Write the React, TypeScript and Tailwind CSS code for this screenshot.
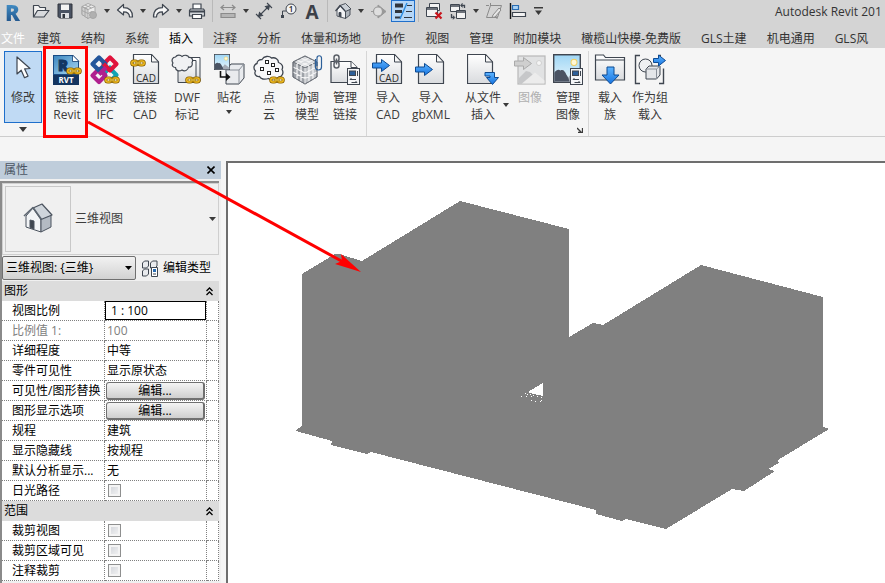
import React from "react";

const ink = "#3f4650";

const Gradients = () => (
  <svg className="absolute size-0" aria-hidden="true">
    <defs>
      <linearGradient id="paper" x1="0" y1="0" x2="0" y2="1">
        <stop offset="0" stopColor="#ffffff" />
        <stop offset="1" stopColor="#d9dbde" />
      </linearGradient>
      <linearGradient id="blue" x1="0" y1="0" x2="0" y2="1">
        <stop offset="0" stopColor="#5db4ff" />
        <stop offset="1" stopColor="#1673e0" />
      </linearGradient>
      <linearGradient id="sky" x1="0" y1="0" x2="0" y2="1">
        <stop offset="0" stopColor="#9fd6f5" />
        <stop offset="1" stopColor="#e8f6fc" />
      </linearGradient>
      <linearGradient id="rvt" x1="0" y1="0" x2="1" y2="1">
        <stop offset="0" stopColor="#3f88c0" />
        <stop offset="1" stopColor="#a6d6f2" />
      </linearGradient>
      <linearGradient id="logo" x1="0" y1="0" x2="0" y2="1">
        <stop offset="0" stopColor="#4b9bd2" />
        <stop offset="1" stopColor="#1d4f86" />
      </linearGradient>
    </defs>
  </svg>
);

/* ---------- shared icon parts ---------- */

const Chain = ({ x, y }) => (
  <g transform={`translate(${x} ${y})`} fill="none">
    <g stroke="#8a6100" strokeWidth="3.200">
      <rect x="1.800" y="2" width="5.400" height="4" rx="2" />
      <rect x="8.800" y="2" width="5.400" height="4" rx="2" />
    </g>
    <g stroke="#f2bd20" strokeWidth="1.500">
      <rect x="1.800" y="2" width="5.400" height="4" rx="2" />
      <rect x="8.800" y="2" width="5.400" height="4" rx="2" />
    </g>
    <g stroke="#fff0c0" strokeWidth="1">
      <path d="M3.500 4h2M10.500 4h2" />
    </g>
    <path d="M5.600 4h4.800" stroke="#8a6100" strokeWidth="2.600" />
    <path d="M5.600 4h4.800" stroke="#ffdc55" strokeWidth="1.200" />
  </g>
);

const Sheet = ({ x = 3 }) => (
  <g transform={`translate(${x} 0)`} stroke={ink} strokeLinejoin="round">
    <path d="M.5 .5h18l7 7.5v21.500h-25z" fill="url(#paper)" strokeWidth="1.200" />
    <path d="M18.500 .5v7.500h7z" fill="#f7f7f7" />
  </g>
);

const ArrowRight = ({ x, y, fill = "url(#blue)", stroke = "#0d4a92" }) => (
  <path
    transform={`translate(${x} ${y})`}
    d="M.5 4h9v-3.500l8 6-8 6v-3.500h-9z"
    fill={fill}
    stroke={stroke}
  />
);

const Landscape = ({ x, y, w, h }) => (
  <svg x={x} y={y} width={w} height={h} viewBox="0 0 28 28" preserveAspectRatio="none">
    <rect x=".7" y=".7" width="26.600" height="26.600" fill="url(#sky)" stroke={ink} strokeWidth="1.400" />
    <circle cx="21" cy="8" r="3" fill="#fff8d6" stroke="#f0cf60" />
    <path d="M12 26.600 19 18l8 6v2.600z" fill="#a3abb6" />
    <path d="M1.400 18c2-2.500 4-3.500 6-2 3-1.500 4.500 1 6 4 1.500 2 2.500 4 3 6.600H1.400z" fill="#4a5363" />
  </svg>
);

const Calc = ({ x, y }) => (
  <g transform={`translate(${x} ${y})`} stroke={ink}>
    <rect x=".5" y=".5" width="12" height="16" fill="#f4f5f7" />
    <rect x="2.500" y="3" width="6" height="4.500" fill="#2c5f99" />
    <path d="M10.500 3v5M3 11.500h6M4.500 10 3 11.500M4.500 14.500h5.500M8.500 13l1.500 1.500" fill="none" />
  </g>
);

/* ---------- ribbon icons, 32 x 32 ---------- */

const ribbonIcons = {
  cursor: (
    <path
      d="M10 3v17l4.200-3.800 3.300 7.500 3.500-1.600-3.300-7.200 5.300-.4z"
      fill="#fff"
      stroke={ink}
      strokeWidth="1.200"
      strokeLinejoin="round"
    />
  ),
  revit: (
    <>
      <path d="M2 1h20l6 6v24H2z" fill="#1a4c85" />
      <path d="M3 2h18.500l5.500 6v12H3z" fill="url(#rvt)" />
      <path d="M21.500 1v6.500H28z" fill="#fff" stroke="#143f72" strokeWidth=".8" />
      <text x="7" y="16.500" fontSize="15" fontWeight="800" fill="#123663" stroke="#123663" fontFamily="Open Sans, sans-serif">
        R
      </text>
      <rect x="2" y="21" width="26" height="10" fill="#143560" />
      <text x="15" y="29" textAnchor="middle" fontSize="8" fontWeight="700" fill="#fff" fontFamily="Open Sans, sans-serif">
        RVT
      </text>
      <Chain x={15} y={13} />
    </>
  ),
  ifc: (
    <>
      <g fill="none" strokeWidth="4.200" strokeLinejoin="round">
        <path d="m20.500 14 7 7-4 4" stroke="#12a3b4" />
        <path d="m14 20.500 7-7 3 3" stroke="#12a3b4" />
        <path d="M10 28 3.500 21.500 10 15l6.500 6.500z" stroke="#b0208e" />
        <path d="m10 15 6.500 6.500" stroke="#b0208e" />
        <path d="M21 3.500 27.500 10 21 16.500 14.500 10z" stroke="#e0143c" />
        <path d="M10 3.500 16.500 10 10 16.500 3.500 10z" stroke="#24569b" />
        <path d="m14.500 10 6.500 6.500" stroke="#e0143c" />
        <path d="m17 13.500-7 7" stroke="#b0208e" />
      </g>
      <Chain x={15} y={22} />
    </>
  ),
  linkCad: (
    <>
      <Sheet x={4} />
      <Chain x={1} y={5} />
      <text x="17" y="28" textAnchor="middle" fontSize="10" fill="#2b2b2b" fontFamily="Open Sans, sans-serif">
        CAD
      </text>
    </>
  ),
  dwf: (
    <>
      <path d="M12 3.500h17v24H12z" fill="url(#paper)" stroke={ink} />
      <path d="M7 6.500h18v22H7z" fill="url(#paper)" stroke={ink} />
      <path
        d="M4.500 3c1.500-2.500 5-2.500 6.500-.5 2.500-2 6-1.500 7 1 3-.5 4.500 2.500 3 5 1 3-1 5-3.500 4.500-.5 3.500-4 5-6.500 3-3 2-6.500.5-6.500-2.500C1.500 13.500.5 11 2 9 0 6.500 1.500 3 4.500 3z"
        fill="#f0f1f3"
        stroke={ink}
        strokeWidth="1.200"
      />
      <Chain x={14} y={22} />
    </>
  ),
  decal: (
    <>
      <path d="m13 16 5-6h13v14l-5 6H13z" fill="#e9ebee" stroke={ink} strokeLinejoin="round" />
      <path d="M13 16h13v14M26 16l5-6" fill="none" stroke="#8a9099" />
      <Landscape x={1} y={0} w={16} h={16} />
      <path d="M7.500 17v6h7" stroke="#111" strokeWidth="1.600" fill="none" />
      <path d="m13 19 4.500 4-4.500 4z" fill="#111" />
    </>
  ),
  cloud: (
    <>
      <path
        d="M9 5.500c2-3.500 7-4 9.500-1.500 4-1 7 1.500 7 4.500 3.500 1 5 4 3.500 7 2 3 .5 7-3 7.500-3 3.500-8 3.500-10.500 1.500-4 1.500-8 .5-9-2-4 .5-5.500-3-4-5.500C-.5 14 1.500 10 4 9.500 4 7.500 6 5.500 9 5.500z"
        fill="#f7f7f8"
        stroke={ink}
        strokeWidth="1.300"
      />
      <g fill="#fff" stroke="#222">
        <rect x="12.500" y="6.500" width="3" height="3" />
        <rect x="7.500" y="13.500" width="3" height="3" />
        <rect x="18.500" y="9.500" width="3" height="3" />
        <rect x="22.500" y="14.500" width="3" height="3" />
        <rect x="14.500" y="17.500" width="3" height="3" />
      </g>
      <Chain x={16} y={22} />
    </>
  ),
  coord: (
    <>
      <g stroke="#6c7178" strokeWidth=".9" strokeLinejoin="round">
        <path d="m14 2 12 6-12 6L2 8z" fill="#dadcdf" />
        <path d="m2 8 12 6v16L2 23z" fill="#9ea2a8" />
        <path d="m26 8-12 6v16l12-7z" fill="#bfc2c6" />
        <path d="m6 6 12 6M10 4l12 6M18 4 6 10M22 6l-12 6M2 13l12 6 12-6M2 18l12 6.500L26 18M6 10v15.500M10 12v15.800M18 12v15.800M22 10v15.500M14 14v16" fill="none" stroke="#f3f3f4" strokeWidth="1.300" />
        <path d="m14 2 12 6v15l-12 7-12-7V8z" fill="none" />
      </g>
      <path d="M24.500 5v8a3 3 0 0 0 6 0V4a2 2 0 0 0-4.500 0v8" fill="none" stroke="#2c5f99" strokeWidth="1.200" />
    </>
  ),
  manageLinks: (
    <>
      <path d="M2 7.500h20l6 6v15H2z" fill="url(#paper)" stroke={ink} strokeWidth="1.200" />
      <path d="M22 7.500v6h6" fill="#fff" stroke={ink} />
      <g fill="none" stroke="#5b6068" strokeWidth="1.500">
        <rect x="5" y="1" width="5" height="6.500" rx="2.500" />
        <rect x="5" y="7.500" width="5" height="6.500" rx="2.500" />
        <path d="M7.500 4.500v6" />
      </g>
      <Calc x={18} y={14} />
    </>
  ),
  importCad: (
    <>
      <Sheet x={4} />
      <ArrowRight x={0} y={5} />
      <text x="17" y="28" textAnchor="middle" fontSize="10" fill="#2b2b2b" fontFamily="Open Sans, sans-serif">
        CAD
      </text>
    </>
  ),
  importXml: (
    <>
      <Sheet x={3} />
      <ArrowRight x={0} y={9} />
    </>
  ),
  insertFile: (
    <>
      <Sheet x={0} />
      <path d="M18 18.500h9.500v5h4l-6 7-6-7h3.500v-1.500H18z" fill="url(#blue)" stroke="#0d4a92" />
    </>
  ),
  imageOff: (
    <>
      <rect x="4" y="2" width="27" height="28" fill="#e1e2e3" stroke="#b8b8b8" strokeWidth="1.200" />
      <circle cx="25" cy="9" r="2.500" fill="#f5f5f5" stroke="#d0d0d0" />
      <path d="m5 24 7-7 4 1 6 6 3 5.500H5z" fill="#c6c7c9" />
      <path d="m8 29.500 13-11 9.500 8v3z" fill="#ececec" />
      <ArrowRight x={0} y={3} fill="#cfcfcf" stroke="#aaaaaa" />
    </>
  ),
  manageImage: (
    <>
      <Landscape x={1} y={0} w={28} h={29} />
      <Calc x={18} y={14} />
    </>
  ),
  loadFamily: (
    <>
      <path d="M1.500 1h8l2 2.500h19V26h-29z" fill="url(#paper)" stroke={ink} strokeWidth="1.200" />
      <path d="M1.500 6h29" stroke={ink} />
      <path d="M13 13h7v8h5l-8.500 9L8 21h5z" fill="url(#blue)" stroke="#0d4a92" />
    </>
  ),
  loadGroup: (
    <>
      <path d="M6 1.500H1.500v28H6M25 29.500h4.500v-15M25 1.500h2" fill="none" stroke={ink} strokeWidth="1.400" />
      <circle cx="11.500" cy="11.500" r="6.500" fill="#eef0f2" stroke={ink} />
      <path d="m12 15 3-3h11v9l-3.500 4H12z" fill="#e4e6e9" stroke={ink} strokeLinejoin="round" />
      <path d="M12 15h10.500v10M22.500 15l3.500-3" fill="none" stroke="#8a9099" />
      <path d="M19.500 4.500h5v-3.500l7 5.500-7 5.500V8.500h-5z" fill="url(#blue)" stroke="#0d4a92" />
    </>
  ),
};

/* ---------- quick access icons, 18 x 18 ---------- */

const House = () => (
  <g stroke={ink} strokeWidth=".9" strokeLinejoin="round">
    <path d="m3 8 3.500-4 5 5v7.500L3 14z" fill="#f1f2f4" />
    <path d="m11.500 9 4.500-2v6l-4.500 3.500z" fill="#aeb4bb" />
    <path d="m6 3.500 5.500-2L17 7l-5.500 2.500z" fill="#cbd0d6" />
    <path d="m1.500 9 4.500-5.500 5.500 6" fill="none" strokeWidth="1.200" />
    <path d="M5 10.500h2V15l-2-1z" fill="#3f4650" />
  </g>
);

const quickIcons = {
  open: (
    <g stroke={ink} strokeWidth="1.200" strokeLinejoin="round">
      <path d="M1.500 15V3.500h5l1.500 2h5.500v3" fill="#f4f4f4" />
      <path d="m1.500 15 4-6.500H17L12 15z" fill="#d8dadd" />
    </g>
  ),
  save: (
    <>
      <path d="M2 2h14v14H3.500L2 14.500z" fill="#4a5363" stroke="#30353d" />
      <path d="M5 2.500h8V8H5z" fill="#f3f3f3" />
      <path d="M5 11h8v5H5z" fill="#dfe1e4" />
      <path d="M6.500 12h2.500v4H6.500z" fill="#30353d" />
    </>
  ),
  sync: (
    <g stroke="#a3a3a3" strokeWidth=".9" fill="#c9c9c9">
      <path d="m8 1.500 7 3v8l-7 4-6-4v-8z" fill="#ececec" />
      <path d="m2 4.500 6 3v9l-6-4z" fill="#d0d0d0" />
      <path d="m2 4.500 6 3 7-3M5 3l6.500 3M11 3 5 6v8M2 8.500l6 3 4-2" fill="none" />
      <circle cx="13" cy="13" r="3.500" fill="#b0b0b0" />
    </g>
  ),
  undo: (
    <path d="M1.500 8 7.500 2.500v3.200c5.500 0 9 2.300 9 9.300h-3c0-4-2-5.200-6-5.200V13z" fill="#f6f6f6" stroke={ink} strokeWidth="1.200" strokeLinejoin="round" />
  ),
  redo: (
    <path d="M16.500 8 10.500 2.500v3.200c-5.500 0-9 2.300-9 9.300h3c0-4 2-5.200 6-5.200V13z" fill="#f6f6f6" stroke={ink} strokeWidth="1.200" strokeLinejoin="round" />
  ),
  print: (
    <g stroke={ink} strokeWidth="1.200">
      <path d="M5 2h8v5H5z" fill="#fff" />
      <path d="M2.500 7h13l1 1.500V14h-15V8.500z" fill="#d4d7db" />
      <path d="M2 9.500h14" strokeWidth="2" />
      <path d="M4.500 12.500h9v4h-9z" fill="#fff" />
    </g>
  ),
  measure: (
    <g stroke="#8b8b8b" fill="none" strokeWidth="1.200">
      <path d="M2 5.500h14M5 3 2 5.500 5 8M13 3l3 2.500L13 8" />
      <path d="M2 11.500h14v4H2z" fill="#b5b5b5" />
    </g>
  ),
  dimension: (
    <g stroke={ink} fill="none" strokeWidth="1.100">
      <path d="M4.500 13.500l9-9M1 12l5 5M12 1l5 5" />
      <path d="m3.500 14.500 1-4 3 3zM14.500 3.500l-1 4-3-3z" fill={ink} />
    </g>
  ),
  tag: (
    <>
      <circle cx="12" cy="7" r="5" fill="#f3f3f3" stroke={ink} />
      <text x="12" y="10" textAnchor="middle" fontSize="8" fontWeight="600" fill="#222" fontFamily="Open Sans, sans-serif">
        1
      </text>
      <path d="M7 9H3.500v5" stroke={ink} fill="none" />
      <path d="M2 13h3v3H2z" fill={ink} />
    </>
  ),
  house: <House />,
  section: (
    <g stroke="#999" fill="#c2c2c2">
      <path d="M8 3v13l8-6.500z" fill="#999" />
      <circle cx="8" cy="9.500" r="4.500" fill="#dedede" strokeWidth="1.200" />
      <path d="M1 9.500h3" />
    </g>
  ),
  thin: (
    <g stroke="#30353d">
      <path d="M1 3.500h8" strokeWidth="4" />
      <path d="M1 9.500h7" strokeWidth="3" />
      <path d="M1 15.500h6" strokeWidth="2" />
      <path d="M13 3.500h5M12 9.500h6M10 15.500h8" />
      <path d="M13 1 6 17" stroke="#2a8be0" strokeWidth="1.400" />
    </g>
  ),
  closeWin: (
    <>
      <g stroke={ink} fill="#f3f3f3">
        <path d="M4.500 1.500h10v7h-10z" />
        <path d="M1.500 5.500h11v9h-11z" />
        <path d="M1.500 7h11" strokeWidth="1.500" />
      </g>
      <path d="m10.500 10.500 6 6m0-6-6 6" stroke="#c8141c" strokeWidth="2.200" />
    </>
  ),
  switchWin: (
    <g stroke={ink} fill="#f3f3f3">
      <path d="M1.500 2.500h9v7h-9z" />
      <path d="M1.500 4h9" strokeWidth="1.500" />
      <path d="M7.500 8.500h9v8h-9z" />
      <path d="M7.500 10h9" strokeWidth="1.500" />
      <path d="M12 3.500h3.500V6M2.500 12v3.500H5" fill="none" strokeWidth="1.300" />
      <path d="m13.500 1-2 2.500 2 2M4 13.500l2 2-2 2" fill={ink} strokeWidth=".6" />
    </g>
  ),
  sketch: (
    <g stroke="#8b8b8b" fill="none">
      <path d="M5.500 3.500h11l-4 12h-11z" />
      <path d="M1 3.500h3M5.500 1v3M12 17v-3" />
      <path d="m8 13 6-7 2 2-6 7-3 .5z" fill="#e6e6e6" />
    </g>
  ),
  align: (
    <g fill="#f3f3f3" stroke={ink} strokeWidth="1.200">
      <path d="M1.500 1v16" stroke="#111" strokeWidth="1.400" />
      <path d="M3.500 3.500h6v4h-6z" fill="#a9d2f5" stroke="#2a6db2" />
      <path d="M3.500 10.500h13v4h-13z" />
    </g>
  ),
};

const Caret = () => (
  <svg width="6" height="4" viewBox="0 0 6 4" aria-hidden="true">
    <path d="M0 0h6L3 4z" fill="#3a3a3a" />
  </svg>
);

const QuickButton = ({ icon, label, active = false }) => (
  <button
    type="button"
    aria-label={label}
    className={
      active
        ? "flex h-[22px] w-6 items-center justify-center border border-[#1f6fcb] bg-[#b5d6f7]"
        : "flex h-[22px] w-6 items-center justify-center"
    }
  >
    <svg width="18" height="18" viewBox="0 0 18 18" className="shrink-0" aria-hidden="true">
      {quickIcons[icon]}
    </svg>
  </button>
);

const QuickCaret = ({ label }) => (
  <button type="button" aria-label={label} className="flex h-[22px] w-3 items-center justify-center">
    <Caret />
  </button>
);

const QuickSeparator = () => (
  <div className="flex h-[22px] w-[7px] justify-center">
    <div className="w-px bg-[#b9b9b9]" />
  </div>
);

const QuickAccess = () => (
  <header className="flex h-7 items-start overflow-hidden bg-[#d4d4d4]">
    <button
      type="button"
      className="h-6 w-[29px] bg-linear-to-b from-[#4b9bd2] to-[#1d4f86] bg-clip-text pl-[5px] text-left text-[22px] leading-6 font-extrabold text-transparent"
    >
      R
    </button>
    <QuickButton icon="open" label="打开" />
    <QuickButton icon="save" label="保存" />
    <QuickButton icon="sync" label="同步" />
    <QuickCaret label="同步选项" />
    <QuickButton icon="undo" label="放弃" />
    <QuickCaret label="放弃列表" />
    <QuickButton icon="redo" label="重做" />
    <QuickCaret label="重做列表" />
    <QuickButton icon="print" label="打印" />
    <QuickSeparator />
    <QuickButton icon="measure" label="测量" />
    <QuickCaret label="测量选项" />
    <QuickButton icon="dimension" label="对齐尺寸标注" />
    <QuickButton icon="tag" label="按类别标记" />
    <button type="button" className="h-6 w-6 text-center text-[19px] leading-6 font-bold text-[#3c4048]">
      A
    </button>
    <QuickSeparator />
    <QuickButton icon="house" label="默认三维视图" />
    <QuickCaret label="三维视图选项" />
    <QuickButton icon="section" label="剖面" />
    <QuickButton icon="thin" label="细线" active />
    <QuickSeparator />
    <QuickButton icon="closeWin" label="关闭隐藏窗口" />
    <QuickButton icon="switchWin" label="切换窗口" />
    <QuickCaret label="窗口列表" />
    <QuickButton icon="sketch" label="编辑" />
    <QuickButton icon="align" label="对齐" />
    <button type="button" aria-label="自定义快速访问工具栏" className="flex h-[22px] w-4 items-center justify-center">
      <svg width="9" height="8" viewBox="0 0 9 8" aria-hidden="true">
        <path d="M0 0h9v1.500H0zM1 3.500h7L4.500 8z" fill="#3a3a3a" />
      </svg>
    </button>
    <h1 className="ml-auto w-[110px] shrink-0 text-[12px] leading-6 whitespace-nowrap text-[#333]">
      Autodesk Revit 201
    </h1>
  </header>
);

const tabs = [
  "建筑",
  "结构",
  "系统",
  "插入",
  "注释",
  "分析",
  "体量和场地",
  "协作",
  "视图",
  "管理",
  "附加模块",
  "橄榄山快模-免费版",
  "GLS土建",
  "机电通用",
  "GLS风",
];

const Tabs = () => (
  <nav className="flex h-5 overflow-hidden bg-[#d4d4d4] text-[12px] leading-[22px] whitespace-nowrap text-[#333]">
    <button type="button" className="w-[27px] shrink-0 pl-px text-left text-white">
      文件
    </button>
    {tabs.map((tab) => (
      <button
        key={tab}
        type="button"
        className={tab === "插入" ? "shrink-0 bg-[#f5f5f5] px-2.5 text-black" : "shrink-0 px-2.5"}
      >
        {tab}
      </button>
    ))}
  </nav>
);

const widths = {
  sm: "w-[38px]",
  md: "w-[42px]",
  lg: "w-[48px]",
  xl: "w-[56px]",
};

const RibbonButton = ({
  icon,
  lines,
  size = "sm",
  selected = false,
  disabled = false,
  caretBelow = false,
  caretAside = false,
}) => (
  <button
    type="button"
    disabled={disabled}
    className={`relative flex h-[72px] shrink-0 flex-col items-center gap-[3px] pt-[3px] text-[12px] leading-[17px] whitespace-nowrap ${widths[size]} ${
      selected ? "bg-[#c0daf4] outline-1 -outline-offset-1 outline-[#1f6fcb]" : ""
    } ${disabled ? "text-[#b0b0b0]" : "text-[#3a3a3a]"}`}
  >
    <svg width="32" height="32" viewBox="0 0 32 32" className="shrink-0" aria-hidden="true">
      {ribbonIcons[icon]}
    </svg>
    <span className="flex flex-col items-center">
      {lines.map((line) => (
        <span key={line}>{line}</span>
      ))}
      {caretBelow && (
        <span className="flex pt-1">
          <Caret />
        </span>
      )}
    </span>
    {caretAside && (
      <span className="absolute right-0.5 bottom-4">
        <Caret />
      </span>
    )}
  </button>
);

const RibbonPanel = ({ children, footer = null, className = "" }) => (
  <section className={`flex shrink-0 flex-col ${className}`}>
    <div className="flex">{children}</div>
    <div className="flex h-[13px] items-center">{footer}</div>
  </section>
);

const Ribbon = () => (
  <div className="flex overflow-hidden border-b border-[#cdcdcd] bg-[#f5f5f5] pt-[3px]">
    <RibbonPanel
      className="mr-1 pl-1"
      footer={
        <button type="button" aria-label="选择" className="mx-auto">
          <svg width="8" height="5" viewBox="0 0 8 5" aria-hidden="true">
            <path d="M0 0h8L4 5z" fill="#3a3a3a" />
          </svg>
        </button>
      }
    >
      <RibbonButton icon="cursor" lines={["修改"]} selected />
    </RibbonPanel>
    <RibbonPanel className="border-r border-[#d6d6d6] pr-0.5 pl-0.5">
      <RibbonButton icon="revit" lines={["链接", "Revit"]} />
      <RibbonButton icon="ifc" lines={["链接", "IFC"]} />
      <RibbonButton icon="linkCad" lines={["链接", "CAD"]} size="md" />
      <RibbonButton icon="dwf" lines={["DWF", "标记"]} size="md" />
      <RibbonButton icon="decal" lines={["贴花"]} size="md" caretBelow />
      <RibbonButton icon="cloud" lines={["点", "云"]} />
      <RibbonButton icon="coord" lines={["协调", "模型"]} />
      <RibbonButton icon="manageLinks" lines={["管理", "链接"]} />
    </RibbonPanel>
    <RibbonPanel
      className="border-r border-[#d6d6d6] pr-px pl-0.5"
      footer={
        <button type="button" aria-label="导入设置" className="mr-1 ml-auto">
          <svg width="6" height="6" viewBox="0 0 6 6" aria-hidden="true">
            <path d="m0 1 4 4M5.500 1v4.500H1" fill="none" stroke="#3a3a3a" strokeWidth="1.300" />
          </svg>
        </button>
      }
    >
      <RibbonButton icon="importCad" lines={["导入", "CAD"]} />
      <RibbonButton icon="importXml" lines={["导入", "gbXML"]} size="lg" />
      <RibbonButton icon="insertFile" lines={["从文件", "插入"]} size="xl" caretAside />
      <RibbonButton icon="imageOff" lines={["图像"]} disabled />
      <RibbonButton icon="manageImage" lines={["管理", "图像"]} />
    </RibbonPanel>
    <RibbonPanel className="pl-0.5">
      <RibbonButton icon="loadFamily" lines={["载入", "族"]} />
      <RibbonButton icon="loadGroup" lines={["作为组", "载入"]} size="md" />
    </RibbonPanel>
  </div>
);

const groups = [
  {
    title: "图形",
    rows: [
      { label: "视图比例", kind: "input", value: "1 : 100" },
      { label: "比例值 1:", kind: "muted", value: "100" },
      { label: "详细程度", kind: "text", value: "中等" },
      { label: "零件可见性", kind: "text", value: "显示原状态" },
      { label: "可见性/图形替换", kind: "button", value: "编辑..." },
      { label: "图形显示选项", kind: "button", value: "编辑..." },
      { label: "规程", kind: "text", value: "建筑" },
      { label: "显示隐藏线", kind: "text", value: "按规程" },
      { label: "默认分析显示...", kind: "text", value: "无" },
      { label: "日光路径", kind: "check", value: "" },
    ],
  },
  {
    title: "范围",
    rows: [
      { label: "裁剪视图", kind: "check", value: "" },
      { label: "裁剪区域可见", kind: "check", value: "" },
      { label: "注释裁剪", kind: "check", value: "" },
    ],
  },
];

const PropertyValue = ({ row }) => {
  if (row.kind === "input") {
    return (
      <input
        aria-label={row.label}
        defaultValue={row.value}
        className="block h-[19px] w-full border border-black bg-white px-[5px] text-[12px]"
      />
    );
  }
  if (row.kind === "button") {
    return (
      <button
        type="button"
        aria-label={`${row.label} ${row.value}`}
        className="mx-px block h-[18px] w-[99px] rounded-[3px] border border-r-2 border-b-2 border-[#707070] bg-linear-to-b from-[#f4f4f4] to-[#cfcfcf] text-center leading-[16px]"
      >
        {row.value}
      </button>
    );
  }
  if (row.kind === "check") {
    return (
      <input
        type="checkbox"
        aria-label={row.label}
        className="ml-[3px] block size-[13px] appearance-none border border-[#8e8f8f] bg-linear-to-br from-[#cfd2d8] to-[#f6f6f6] outline-2 -outline-offset-3 outline-[#f4f4f4] checked:bg-[#4b5f83]"
      />
    );
  }
  return <span className={row.kind === "muted" ? "pl-0.5 text-[#808080]" : "pl-0.5"}>{row.value}</span>;
};

const dotted = "border-dotted border-[#808080]";

const PropertyGrid = () => (
  <table className="w-full table-fixed border-separate border-spacing-0 bg-white text-[12px] leading-[18px] whitespace-nowrap text-black">
    <colgroup>
      <col />
      <col className="w-[102px]" />
      <col className="w-3" />
    </colgroup>
    {groups.map((group) => (
      <tbody key={group.title}>
        <tr>
          <th colSpan={3} className="h-5 bg-[#dcdcdc] p-0 font-normal">
            <button type="button" className="flex w-full items-center justify-between pr-[6px] pl-0.5">
              {group.title}
              <svg width="7" height="9" viewBox="0 0 7 9" aria-hidden="true">
                <path d="m.5 4 3-3 3 3M.5 8l3-3 3 3" fill="none" stroke="#000" strokeWidth="1.300" />
              </svg>
            </button>
          </th>
        </tr>
        {group.rows.map((row) => (
          <tr key={row.label}>
            <td
              className={`h-5 overflow-hidden border-r border-b p-0 pl-2.5 ${dotted} ${
                row.kind === "muted" ? "text-[#808080]" : ""
              }`}
            >
              {row.label}
            </td>
            <td className={`h-5 border-r border-b p-0 ${dotted}`}>
              <PropertyValue row={row} />
            </td>
            <td className={`h-5 border-r border-b p-0 ${dotted}`} />
          </tr>
        ))}
      </tbody>
    ))}
  </table>
);

const Properties = () => (
  <aside className="flex w-[221px] shrink-0 flex-col bg-[#f0f0f0] text-[12px]">
    <div className="flex h-[18px] items-center justify-between bg-[#bfcddb] pr-[6px] pl-1 text-[#4b5563]">
      <h2>属性</h2>
      <button type="button" aria-label="关闭">
        <svg width="8" height="8" viewBox="0 0 8 8" aria-hidden="true">
          <path d="m.5.5 7 7m0-7-7 7" stroke="#000" strokeWidth="1.600" />
        </svg>
      </button>
    </div>
    <div className="mt-0.5 mr-0.5 flex-1 border-t-2 border-l-2 border-[#8a8a8a]">
      <button
        type="button"
        className="flex w-full items-center border border-[#cfcfcf] py-0.5 pr-0.5 pl-0.5 text-[#3c3c3c]"
      >
        <span className="flex size-[66px] items-center justify-center border border-[#c8c8c8]">
          <svg width="30" height="32" viewBox="0 0 30 32" aria-hidden="true">
            <g stroke="#4b535e" strokeLinejoin="round">
              <path d="m3 13 7-8 8 10v14L3 24z" fill="#f2f4f6" />
              <path d="m18 15 10-3v12l-10 5z" fill="#b4bbc3" />
              <path d="m10 5 9-4 10 11-11 4.500z" fill="#cfd5db" strokeWidth="1.200" />
              <path d="m1 13 9-8.500 8.500 12" fill="none" stroke="#5d6671" strokeWidth="1.600" />
              <path d="m7 17 4 1v8l-4-1.500z" fill="#3f4650" />
            </g>
          </svg>
        </span>
        <span className="pl-1">三维视图</span>
        <svg width="7" height="4" viewBox="0 0 7 4" className="ml-auto" aria-hidden="true">
          <path d="M0 0h7L3.500 4z" fill="#3a3a3a" />
        </svg>
      </button>
      <div className="flex h-[26px] items-center text-black">
        <div className="relative">
          <select
            aria-label="视图"
            className="block h-6 w-[134px] appearance-none rounded-xs border border-[#707070] bg-linear-to-b from-[#f2f2f2] to-[#d2d2d2] pl-[3px] text-[12px]"
          >
            <option>三维视图: {"{三维}"}</option>
          </select>
          <svg width="7" height="4" viewBox="0 0 7 4" className="absolute top-[10px] right-1" aria-hidden="true">
            <path d="M0 0h7L3.500 4z" fill="#000" />
          </svg>
        </div>
        <button type="button" className="flex items-center gap-1 pl-[6px]">
          <svg width="17" height="17" viewBox="0 0 17 17" aria-hidden="true">
            <g fill="#e9ebee" stroke={ink}>
              <path d="m.5 3 2-2h4v5l-2 2h-4zM8.500 3l2-2h4.500v5l-2 2H8.500zM.5 11l2-2h4v5l-2 2h-4z" />
              <path d="M9.500 7.500h6v9h-6z" fill="#fff" />
            </g>
            <path d="M11 9h3v3h-3z" fill="#2a6db2" />
            <path d="M11 14h3" stroke={ink} />
          </svg>
          编辑类型
        </button>
      </div>
      <PropertyGrid />
    </div>
  </aside>
);

const specks = [
  [525, 393], [527, 394], [530, 394], [533, 395], [521, 396], [526, 396], [531, 396], [537, 396],
  [541, 397], [531, 400], [535, 401], [541, 400], [540, 401],
];

const Viewport = () => (
  <main className="min-w-0 flex-1 overflow-hidden border-t-2 border-l-2 border-[#6e6e6e] bg-white">
    <svg width="657" height="420" viewBox="228 163 657 420" shapeRendering="crispEdges" role="img" aria-label="三维模型">
      <path
        d="M302 274 335 254h4l23 7 98-60 109 28v108l24-14 10 2 98-60 122 32v130l6 2-51 31 1 3-11 6 7 2-31 20-12-2-66 40-40-10-4 2-26-7v-4l-225-58-4 2-36-9 1-4-36-10v-1l6-4z"
        fill="#808080"
      />
      <path d="M528 392 543 383v13l-10-2z" fill="#fff" />
      {specks.map(([x, y]) => (
        <rect key={`${x}-${y}`} x={x} y={y} width="1" height="1" fill="#fff" />
      ))}
    </svg>
  </main>
);

// red frame round the "link Revit" button and the arrow into the model
const Callout = () => (
  <svg
    width="400"
    height="300"
    viewBox="0 0 400 300"
    className="pointer-events-none absolute top-0 left-0"
    aria-hidden="true"
  >
    <rect x="44.500" y="47.500" width="42" height="89" fill="none" stroke="#f00" strokeWidth="3" />
    <path d="M88 122 345 263" stroke="#f00" strokeWidth="3" />
    <path d="M361 272 341 254l1 7-7 3z" fill="#f00" />
  </svg>
);

const App = () => {
  return (
    <div className="relative flex h-screen flex-col overflow-hidden bg-[#f5f5f5] font-['Open_Sans','Noto_Sans_CJK_SC',sans-serif]">
      <Gradients />
      <QuickAccess />
      <Tabs />
      <Ribbon />
      <div className="mt-6 flex min-h-0 flex-1 gap-[5px] overflow-hidden">
        <Properties />
        <Viewport />
      </div>
      <Callout />
    </div>
  );
};

export default App;
